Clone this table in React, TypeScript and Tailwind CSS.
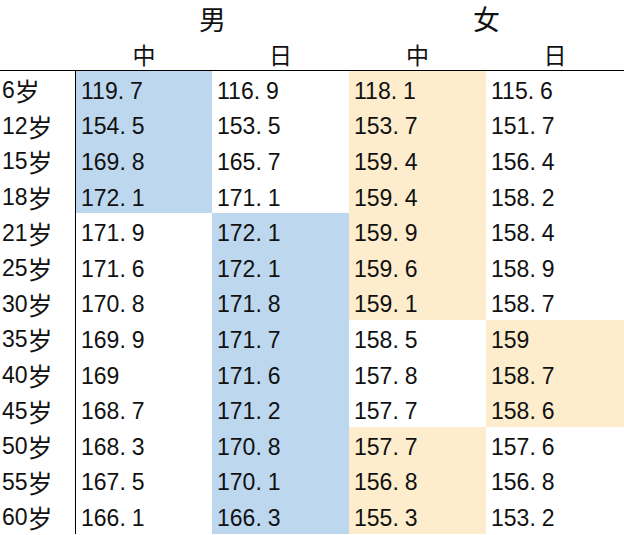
import React from "react";

const BLUE = "bg-[#bdd7ee]";
const TAN = "bg-[#fdedcc]";

type Row = [string, string, string, string, string];

const rows: Row[] = [
  ["6岁", "119.7", "116.9", "118.1", "115.6"],
  ["12岁", "154.5", "153.5", "153.7", "151.7"],
  ["15岁", "169.8", "165.7", "159.4", "156.4"],
  ["18岁", "172.1", "171.1", "159.4", "158.2"],
  ["21岁", "171.9", "172.1", "159.9", "158.4"],
  ["25岁", "171.6", "172.1", "159.6", "158.9"],
  ["30岁", "170.8", "171.8", "159.1", "158.7"],
  ["35岁", "169.9", "171.7", "158.5", "159"],
  ["40岁", "169", "171.6", "157.8", "158.7"],
  ["45岁", "168.7", "171.2", "157.7", "158.6"],
  ["50岁", "168.3", "170.8", "157.7", "157.6"],
  ["55岁", "167.5", "170.1", "156.8", "156.8"],
  ["60岁", "166.1", "166.3", "155.3", "153.2"],
];

function bgFor(r: number, c: number): string {
  if (c === 1) return r < 4 ? BLUE : "bg-white";
  if (c === 2) return r >= 4 ? BLUE : "bg-white";
  if (c === 3) return r >= 7 && r <= 9 ? "bg-white" : TAN;
  if (c === 4) return r >= 7 && r <= 9 ? TAN : "bg-white";
  return "bg-white";
}

function Num({ v }: { v: string }) {
  const [a, b] = v.split(".");
  return (
    <span>
      {a}
      {b !== undefined && (
        <>
          .<span className="ml-[6px]">{b}</span>
        </>
      )}
    </span>
  );
}

export default function App() {
  return (
    <div
      className="w-[624px] h-[535px] overflow-hidden bg-white text-[#111]"
      style={{ fontFamily: '"Liberation Sans", "Noto Sans CJK SC", sans-serif' }}
    >
      <div className="grid grid-cols-[76px_136px_137px_137px_138px]">
        <div className="h-[37px]" />
        <div className="col-span-2 h-[37px] flex items-center justify-center text-[27px] leading-none" style={{ fontFamily: '"Noto Sans CJK SC", sans-serif' }}>
          男
        </div>
        <div className="col-span-2 h-[37px] flex items-center justify-center text-[27px] leading-none" style={{ fontFamily: '"Noto Sans CJK SC", sans-serif' }}>
          女
        </div>

        <div className="h-[34px] border-b border-black" />
        {["中", "日", "中", "日"].map((t, i) => (
          <div
            key={i}
            className="h-[34px] border-b border-black flex items-center justify-center pt-[2px] text-[23px] leading-none"
            style={{ fontFamily: '"Noto Sans CJK SC", sans-serif' }}
          >
            {t}
          </div>
        ))}

        {rows.map((row, r) => (
          <React.Fragment key={r}>
            <div className="h-[35.6px] border-r border-black flex items-center pl-[2px] pt-[4px] text-[23px] leading-none">
              <span>{row[0].replace("岁", "")}</span>
              <span className="text-[25px]" style={{ fontFamily: '"Noto Sans CJK SC", sans-serif' }}>岁</span>
            </div>
            {row.slice(1).map((v, c) => (
              <div
                key={c}
                className={`h-[35.6px] flex items-center pl-[5px] pt-[5px] text-[23px] leading-none ${bgFor(r, c + 1)}`}
              >
                <Num v={v} />
              </div>
            ))}
          </React.Fragment>
        ))}
      </div>
    </div>
  );
}
